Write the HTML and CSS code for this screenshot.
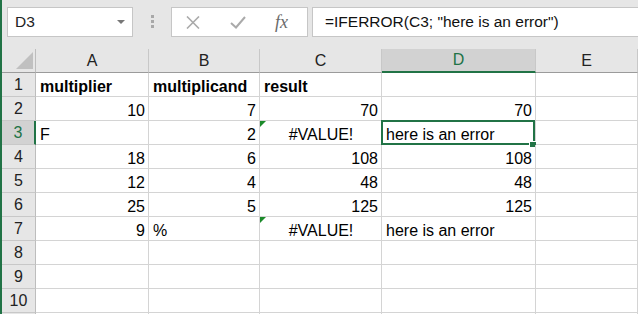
FILE: index.html
```html
<!DOCTYPE html>
<html>
<head>
  <meta charset="utf-8" />
  <title>IFERROR</title>
  <link rel="stylesheet" href="styles.css">
</head>
<body>
  <div class="app">
    <div class="toolbar">
      <div class="namebox">
        <span>D3</span>
        <svg class="arrow" width="8" height="4" viewBox="0 0 8 4"><path d="M0 0H8L4 4Z" fill="#777"/></svg>
      </div>
      <svg class="grip" width="3" height="13" viewBox="0 0 3 13">
        <rect x="0" y="0" width="3" height="3" fill="#a8a8a8"/>
        <rect x="0" y="5" width="3" height="3" fill="#a8a8a8"/>
        <rect x="0" y="10" width="3" height="3" fill="#a8a8a8"/>
      </svg>
      <div class="fxbox">
        <svg class="cancel" width="14" height="13" viewBox="0 0 14 13"><path d="M1 0.5L13 12.5M13 0.5L1 12.5" stroke="#aaa" stroke-width="1.6" fill="none"/></svg>
        <svg class="enter" width="16" height="13" viewBox="0 0 16 13"><path d="M1 7L6 11.5L15 1" stroke="#aaa" stroke-width="2" fill="none"/></svg>
        <span class="fx">fx</span>
      </div>
      <div class="formula">=IFERROR(C3; "here is an error")</div>
    </div>

    <div class="sheet">
      <div class="corner"><span class="tri"></span></div>
      <div class="colhead">A</div>
      <div class="colhead">B</div>
      <div class="colhead">C</div>
      <div class="colhead active">D</div>
      <div class="colhead">E</div>

      <div class="rowhead">1</div>
      <div class="cell bold">multiplier</div>
      <div class="cell bold">multiplicand</div>
      <div class="cell bold">result</div>
      <div class="cell"></div>
      <div class="cell"></div>

      <div class="rowhead">2</div>
      <div class="cell num">10</div>
      <div class="cell num">7</div>
      <div class="cell num">70</div>
      <div class="cell num">70</div>
      <div class="cell"></div>

      <div class="rowhead active">3</div>
      <div class="cell">F</div>
      <div class="cell num">2</div>
      <div class="cell err flag">#VALUE!</div>
      <div class="cell selected">here is an error</div>
      <div class="cell"></div>

      <div class="rowhead">4</div>
      <div class="cell num">18</div>
      <div class="cell num">6</div>
      <div class="cell num">108</div>
      <div class="cell num">108</div>
      <div class="cell"></div>

      <div class="rowhead">5</div>
      <div class="cell num">12</div>
      <div class="cell num">4</div>
      <div class="cell num">48</div>
      <div class="cell num">48</div>
      <div class="cell"></div>

      <div class="rowhead">6</div>
      <div class="cell num">25</div>
      <div class="cell num">5</div>
      <div class="cell num">125</div>
      <div class="cell num">125</div>
      <div class="cell"></div>

      <div class="rowhead">7</div>
      <div class="cell num">9</div>
      <div class="cell">%</div>
      <div class="cell err flag">#VALUE!</div>
      <div class="cell">here is an error</div>
      <div class="cell"></div>

      <div class="rowhead">8</div>
      <div class="cell"></div><div class="cell"></div><div class="cell"></div><div class="cell"></div><div class="cell"></div>
      <div class="rowhead">9</div>
      <div class="cell"></div><div class="cell"></div><div class="cell"></div><div class="cell"></div><div class="cell"></div>
      <div class="rowhead">10</div>
      <div class="cell"></div><div class="cell"></div><div class="cell"></div><div class="cell"></div><div class="cell"></div>
      <div class="rowhead"></div>
      <div class="cell"></div><div class="cell"></div><div class="cell"></div><div class="cell"></div><div class="cell"></div>
    </div>
  </div>
</body>
</html>
```

FILE: styles.css
```css
body {
  margin: 0;
  font-family: "Liberation Sans", Arial, sans-serif;
  background: #fff;
  color: #000;
}
.app {
  border-left: 2px solid #217346;
  height: 314px;
  overflow: hidden;
}
.toolbar {
  display: flex;
  align-items: flex-start;
  height: 49px;
  padding-top: 7px;
  box-sizing: border-box;
  background: #e6e6e6;
}
.namebox {
  margin-left: 5px;
  width: 126px;
  height: 30px;
  box-sizing: border-box;
  border: 1px solid #c6c6c6;
  background: #fff;
  display: flex;
  align-items: center;
  justify-content: space-between;
  padding: 0 7px;
  font-size: 15.5px;
  color: #222;
}
.grip {
  margin-left: 18px;
  margin-top: 8px;
}
.fxbox {
  margin-left: 17px;
  width: 137px;
  height: 30px;
  box-sizing: border-box;
  border: 1px solid #c6c6c6;
  background: #fff;
  display: flex;
  align-items: center;
  padding-left: 14px;
}
.enter {
  margin-left: 30px;
}
.fx {
  margin-left: 29px;
  font-family: "Liberation Serif", "Times New Roman", serif;
  font-style: italic;
  font-size: 18px;
  color: #6a6a6a;
}
.formula {
  flex: 1;
  margin-left: 4px;
  height: 30px;
  box-sizing: border-box;
  border: 1px solid #c6c6c6;
  border-right: none;
  background: #fff;
  display: flex;
  align-items: center;
  padding-left: 12px;
  font-size: 15.5px;
  white-space: nowrap;
  color: #111;
}
.sheet {
  display: grid;
  grid-template-columns: 34px 113px 111px 122px 154px 1fr;
  grid-auto-rows: 24px;
}
.corner,
.colhead,
.rowhead {
  background: #e6e6e6;
  box-sizing: border-box;
  display: flex;
  align-items: center;
  justify-content: center;
  font-size: 16px;
  color: #222;
}
.corner {
  position: relative;
  border-right: 1px solid #bdbdbd;
  border-bottom: 1px solid #9b9b9b;
}
.tri {
  position: absolute;
  right: 2px;
  bottom: 3px;
  width: 0;
  height: 0;
  border-left: 17px solid transparent;
  border-bottom: 17px solid #c0c0c0;
}
.colhead {
  border-right: 1px solid #c8c8c8;
  border-bottom: 1px solid #9b9b9b;
}
.colhead.active {
  background: #d2d2d2;
  color: #217346;
  border-bottom: 2px solid #217346;
}
.rowhead {
  border-right: 1px solid #bdbdbd;
  border-bottom: 1px solid #c8c8c8;
}
.rowhead.active {
  background: #d2d2d2;
  color: #217346;
  border-right: 2px solid #217346;
}
.cell {
  position: relative;
  box-sizing: border-box;
  border-right: 1px solid #d4d4d4;
  border-bottom: 1px solid #d4d4d4;
  display: flex;
  align-items: flex-end;
  padding: 0 3px 0 4px;
  font-size: 16px;
  line-height: 18px;
  white-space: nowrap;
}
.bold {
  font-weight: bold;
}
.num {
  justify-content: flex-end;
}
.err {
  justify-content: center;
}
.flag::before {
  content: "";
  position: absolute;
  left: 0;
  top: 0;
  border-top: 6px solid #1b8a2a;
  border-right: 6px solid transparent;
}
.selected::before {
  content: "";
  position: absolute;
  left: -1px;
  top: -1px;
  right: 0;
  bottom: -1px;
  border: 2px solid #217346;
}
.selected::after {
  content: "";
  position: absolute;
  right: -1px;
  bottom: -3px;
  width: 6px;
  height: 5px;
  background: #217346;
  box-shadow: 0 0 0 1px #fff;
}
```
